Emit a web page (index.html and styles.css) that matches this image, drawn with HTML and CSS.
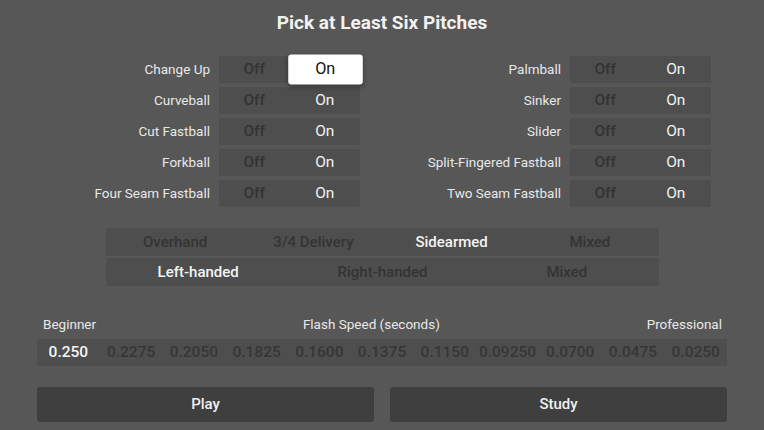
FILE: index.html
```html
<!DOCTYPE html>
<html>
<head>
<meta charset="utf-8">
<link rel="stylesheet" href="styles.css">
</head>
<body>
<div class="page">
  <h1 class="title">Pick at Least Six Pitches</h1>
  <div class="pitches">
    <div class="label">Change Up</div>
    <div class="seg"><span class="off">Off</span><span class="on focused">On</span></div>
    <div class="label">Palmball</div>
    <div class="seg"><span class="off">Off</span><span class="on">On</span></div>

    <div class="label">Curveball</div>
    <div class="seg"><span class="off">Off</span><span class="on">On</span></div>
    <div class="label">Sinker</div>
    <div class="seg"><span class="off">Off</span><span class="on">On</span></div>

    <div class="label">Cut Fastball</div>
    <div class="seg"><span class="off">Off</span><span class="on">On</span></div>
    <div class="label">Slider</div>
    <div class="seg"><span class="off">Off</span><span class="on">On</span></div>

    <div class="label">Forkball</div>
    <div class="seg"><span class="off">Off</span><span class="on">On</span></div>
    <div class="label">Split-Fingered Fastball</div>
    <div class="seg"><span class="off">Off</span><span class="on">On</span></div>

    <div class="label">Four Seam Fastball</div>
    <div class="seg"><span class="off">Off</span><span class="on">On</span></div>
    <div class="label">Two Seam Fastball</div>
    <div class="seg"><span class="off">Off</span><span class="on">On</span></div>
  </div>

  <div class="delivery">
    <div class="wide seg4"><span>Overhand</span><span>3/4 Delivery</span><span class="sel">Sidearmed</span><span>Mixed</span></div>
    <div class="wide seg3"><span class="sel">Left-handed</span><span>Right-handed</span><span>Mixed</span></div>
  </div>

  <div class="speed">
    <div class="speed-labels"><span>Beginner</span><span>Flash Speed (seconds)</span><span>Professional</span></div>
    <div class="speed-seg">
      <span class="sel">0.250</span><span>0.2275</span><span>0.2050</span><span>0.1825</span><span>0.1600</span><span>0.1375</span><span>0.1150</span><span>0.09250</span><span>0.0700</span><span>0.0475</span><span>0.0250</span>
    </div>
  </div>

  <div class="actions">
    <div class="btn">Play</div>
    <div class="btn">Study</div>
  </div>
</div>
</body>
</html>
```

FILE: styles.css
```css
* { box-sizing: border-box; }
html, body {
  margin: 0;
  padding: 0;
  background: #575757;
}
body {
  width: 764px;
  height: 430px;
  overflow: hidden;
  font-family: Roboto, "Liberation Sans", Arial, sans-serif;
  color: #e4e4e4;
}
.page {
  display: flex;
  flex-direction: column;
  padding-top: 11px;
}
.title {
  margin: 0;
  text-align: center;
  font-size: 19px;
  font-weight: 700;
  line-height: 23px;
  color: #f2f2f2;
}
.pitches {
  margin-top: 22px;
  display: grid;
  grid-template-columns: 219px 141px 210px 141px;
  grid-auto-rows: 27px;
  row-gap: 4px;
}
.label {
  text-align: right;
  padding-right: 9px;
  font-size: 13.5px;
  line-height: 26px;
  color: #e8e8e8;
}
.seg {
  display: flex;
  background: #4e4e4e;
  border-radius: 2px;
}
.seg span {
  flex: 1;
  text-align: center;
  font-size: 15.5px;
  line-height: 27px;
}
.seg .off { color: #333333; font-weight: 500; }
.seg .on { color: #f2f2f2; }
.seg .focused {
  background: #ffffff;
  color: #111111;
  border-radius: 3px;
  transform: scale(1.05, 1.11);
  box-shadow: 0 2px 5px rgba(0,0,0,0.35);
}
.delivery {
  margin-top: 21px;
  margin-left: 106px;
  width: 553px;
  display: flex;
  flex-direction: column;
  gap: 2px;
}
.wide {
  display: flex;
  background: #4e4e4e;
  border-radius: 2px;
  height: 28px;
}
.wide span {
  flex: 1;
  text-align: center;
  font-size: 15px;
  line-height: 28px;
  color: #343434;
  font-weight: 500;
}
.wide .sel {
  color: #f4f4f4;
}
.speed {
  margin-top: 30px;
  margin-left: 37px;
  width: 690px;
  display: flex;
  flex-direction: column;
}
.speed-labels {
  display: flex;
  justify-content: space-between;
  padding: 0 5px 0 6px;
  font-size: 13.5px;
  line-height: 16px;
  color: #e8e8e8;
}
.speed-seg {
  margin-top: 7px;
  display: flex;
  height: 27px;
  background: #4e4e4e;
  border-radius: 2px;
}
.speed-seg span {
  flex: 1;
  text-align: center;
  font-size: 15.5px;
  line-height: 27px;
  color: #363636;
  font-weight: 500;
}
.speed-seg .sel {
  color: #f6f6f6;
}
.actions {
  margin-top: 21px;
  margin-left: 37px;
  width: 690px;
  display: flex;
  gap: 16px;
}
.btn {
  flex: 1;
  height: 35px;
  background: #3f3f3f;
  border-radius: 3px;
  text-align: center;
  line-height: 35px;
  font-size: 15px;
  font-weight: 500;
  color: #f0f0f0;
}
```
